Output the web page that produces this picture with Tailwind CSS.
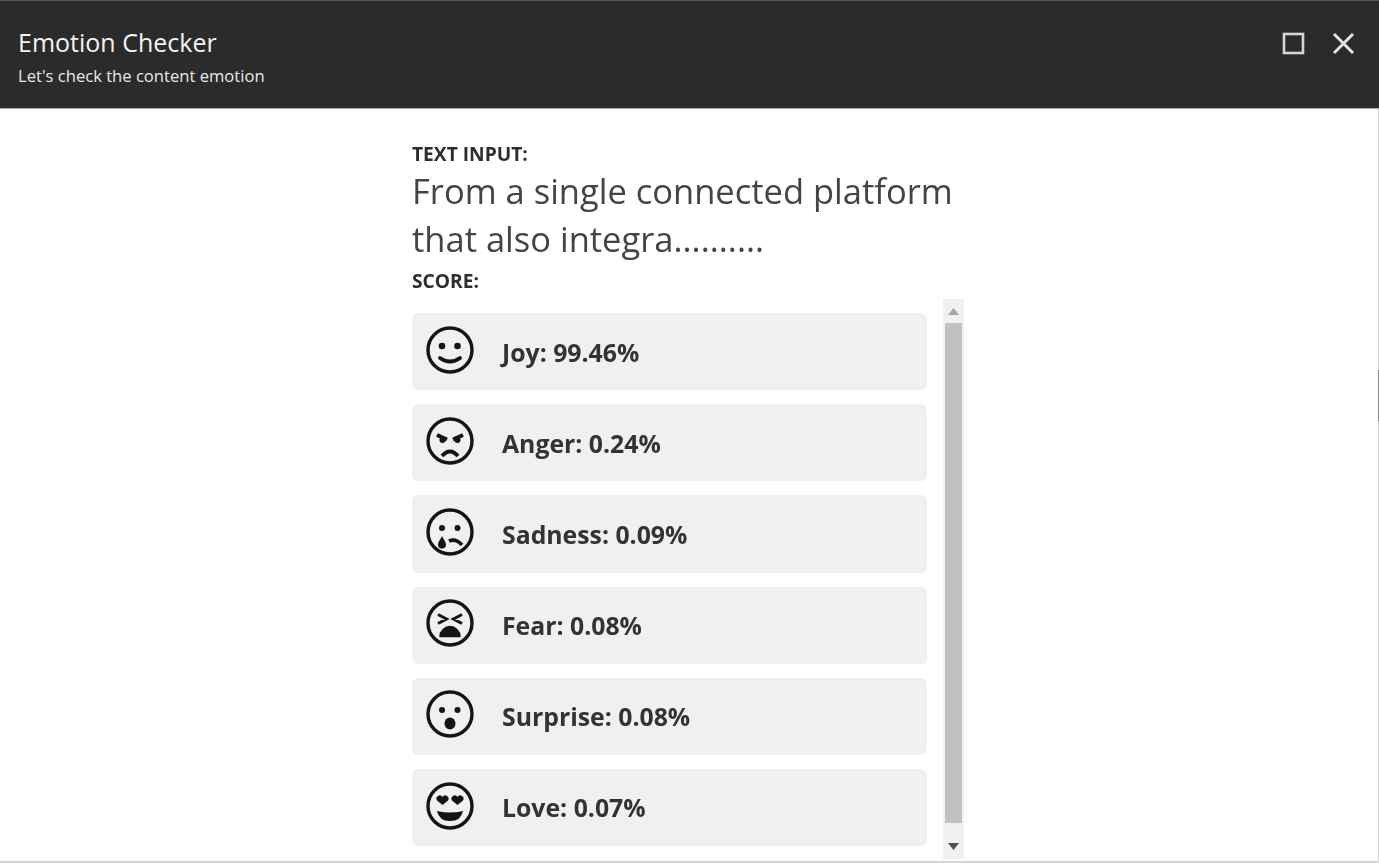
<!DOCTYPE html>
<html>
<head>
<meta charset="utf-8">
<script src="https://cdn.jsdelivr.net/npm/@tailwindcss/browser@4"></script>
</head>
<body class="bg-white font-['Open_Sans',sans-serif] overflow-hidden">
<div class="relative h-[863px] w-[1379px] flex flex-col border-b-2 border-[#d4d4d4] overflow-hidden blur-[0.7px]">
  <header class="h-[109px] shrink-0 bg-[#2b2b2b] border-t border-[#5a5a5a] border-b border-b-[#a8a8a8] flex justify-between pl-[18px] pr-[24px]">
    <div class="pt-[24px]">
      <div class="text-[25px] leading-[34px] text-[#f4f4f4]">Emotion Checker</div>
      <div class="text-[16.6px] leading-[20px] mt-[7px] text-[#e8e8e8]">Let's check the content emotion</div>
    </div>
    <div class="flex gap-[27px] pt-[31px] h-fit">
      <svg width="23" height="23" viewBox="0 0 23 23" fill="none" stroke="#d6d6d6" stroke-width="2.6"><rect x="2" y="2" width="19" height="19"/></svg>
      <svg width="23" height="23" viewBox="0 0 23 23" fill="none" stroke="#e2e2e2" stroke-width="3"><path d="M2 2 21 21M21 2 2 21"/></svg>
    </div>
  </header>
  <main class="flex-1 w-[552px] ml-[412px] pt-[33px] text-[#333]">
    <div class="text-[19.2px] leading-[24px] font-bold text-[#2e2e2e]">TEXT INPUT:</div>
    <div class="text-[34.5px] leading-[48px] mt-[1px] text-[#444]">From a single connected platform<br>that also integra..........</div>
    <div class="text-[19.2px] leading-[24px] font-bold mt-[6px] text-[#2e2e2e]">SCORE:</div>
    <div class="flex justify-between mt-[6px]">
      <div class="w-[515px] pt-[14px] flex flex-col gap-[14px]">
        <div class="h-[77.2px] rounded-[6px] bg-[#f0f0f0] flex items-center pl-[14px] gap-[28px]">
          <svg class="-mt-[4px]" width="48" height="48" viewBox="0 0 48 48" fill="none" stroke="#141414" stroke-width="3.4"><circle cx="24" cy="24" r="22"/><circle cx="16" cy="20" r="3.300" fill="#141414" stroke="none"/><circle cx="31.500" cy="20" r="3.300" fill="#141414" stroke="none"/><path d="M14 32q10 7 20 0" stroke-linecap="round" stroke-width="3.800"/></svg>
          <span class="text-[24.8px] font-bold text-[#333] pt-[2px]">Joy: 99.46%</span>
        </div>
        <div class="h-[77.2px] rounded-[6px] bg-[#f0f0f0] flex items-center pl-[14px] gap-[28px]">
          <svg class="-mt-[4px]" width="48" height="48" viewBox="0 0 48 48" fill="none" stroke="#141414" stroke-width="3.4"><circle cx="24" cy="24" r="22"/><path d="M11 18 21 22.500M37 18 27 22.500" stroke-width="4"/><circle cx="16.500" cy="23" r="3" fill="#141414" stroke="none"/><circle cx="31.500" cy="23" r="3" fill="#141414" stroke="none"/><path d="M16 39q8-9 16 0" stroke-width="3.800"/></svg>
          <span class="text-[24.8px] font-bold text-[#333] pt-[2px]">Anger: 0.24%</span>
        </div>
        <div class="h-[77.2px] rounded-[6px] bg-[#f0f0f0] flex items-center pl-[14px] gap-[28px]">
          <svg class="-mt-[4px]" width="48" height="48" viewBox="0 0 48 48" fill="none" stroke="#141414" stroke-width="3.4"><circle cx="24" cy="24" r="22"/><circle cx="16" cy="20" r="3" fill="#141414" stroke="none"/><circle cx="31.500" cy="20" r="3" fill="#141414" stroke="none"/><path d="M23 33q7-3 13 4" stroke-width="3.800"/><path d="M16 28c-1.500 3.500-4 5.500-4 8.500a4 4 0 0 0 8 0c0-3-2.500-5-4-8.500z" fill="#141414" stroke="none"/></svg>
          <span class="text-[24.8px] font-bold text-[#333] pt-[2px]">Sadness: 0.09%</span>
        </div>
        <div class="h-[77.2px] rounded-[6px] bg-[#f0f0f0] flex items-center pl-[14px] gap-[28px]">
          <svg class="-mt-[4px]" width="48" height="48" viewBox="0 0 48 48" fill="none" stroke="#141414" stroke-width="3.4"><circle cx="24" cy="24" r="22"/><path d="M12 15.500 20.500 20 12 24.500M36 15.500 27.500 20 36 24.500" stroke-width="3"/><path d="M14 37.500c0-5 5-10 10-10s10 5 10 10z" fill="#141414" stroke="#141414" stroke-linejoin="round" stroke-width="1.500"/></svg>
          <span class="text-[24.8px] font-bold text-[#333]">Fear: 0.08%</span>
        </div>
        <div class="h-[77.2px] rounded-[6px] bg-[#f0f0f0] flex items-center pl-[14px] gap-[28px]">
          <svg class="-mt-[4px]" width="48" height="48" viewBox="0 0 48 48" fill="none" stroke="#141414" stroke-width="3.4"><circle cx="24" cy="24" r="22"/><circle cx="16" cy="20" r="3" fill="#141414" stroke="none"/><circle cx="31.500" cy="20" r="3" fill="#141414" stroke="none"/><ellipse cx="24" cy="33.500" rx="5.500" ry="6" fill="#141414" stroke="none"/></svg>
          <span class="text-[24.8px] font-bold text-[#333]">Surprise: 0.08%</span>
        </div>
        <div class="h-[77.2px] rounded-[6px] bg-[#f0f0f0] flex items-center pl-[14px] gap-[28px]">
          <svg class="-mt-[4px]" width="48" height="48" viewBox="0 0 48 48" fill="none" stroke="#141414" stroke-width="3.4"><circle cx="24" cy="24" r="22"/><path d="M16.500 23 11 18.500a3 3 0 0 1 5.500-3.500 3 3 0 0 1 5.500 3.500zM31.500 23 26 18.500a3 3 0 0 1 5.500-3.500 3 3 0 0 1 5.500 3.500z" fill="#141414" stroke="none"/><path d="M11 29q13 3 26 0q-2 10-13 10t-13-10z" fill="#141414" stroke="none"/></svg>
          <span class="text-[24.8px] font-bold text-[#333]">Love: 0.07%</span>
        </div>
      </div>
      <div class="w-[21px] h-[560px] bg-[#f1f1f1] flex flex-col items-center">
        <div class="h-[24px] flex items-center justify-center"><svg width="11" height="7" viewBox="0 0 11 7"><path d="M5.500 0 11 7H0z" fill="#a6a6a6"/></svg></div>
        <div class="w-[17px] h-[500px] bg-[#c1c1c1]"></div>
        <div class="h-[36px] pt-[20px]"><svg width="11" height="7" viewBox="0 0 11 7"><path d="M0 0H11L5.500 7z" fill="#505050"/></svg></div>
      </div>
    </div>
  </main>
  <div class="absolute right-0 top-[109px] bottom-0 w-[1px] bg-[#d4d4d4]"></div>
  <div class="absolute right-0 top-[370px] h-[51px] w-[1px] bg-[#8a8a8a]"></div>
</div>
</body>
</html>
